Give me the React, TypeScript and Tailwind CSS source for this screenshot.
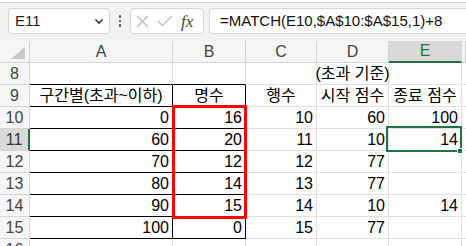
import React from 'react';

type Cell = { v: string; align?: 'c' | 'r' };

const rows: { n: number; cells: Cell[] }[] = [
  { n: 8, cells: [{ v: '' }, { v: '' }, { v: '' }, { v: '(초과 기준)', align: 'c' }, { v: '' }] },
  {
    n: 9,
    cells: [
      { v: '구간별(초과~이하)', align: 'c' },
      { v: '명수', align: 'c' },
      { v: '행수', align: 'c' },
      { v: '시작 점수', align: 'c' },
      { v: '종료 점수', align: 'c' },
    ],
  },
  { n: 10, cells: [{ v: '0' }, { v: '16' }, { v: '10' }, { v: '60' }, { v: '100' }] },
  { n: 11, cells: [{ v: '60' }, { v: '20' }, { v: '11' }, { v: '10' }, { v: '14' }] },
  { n: 12, cells: [{ v: '70' }, { v: '12' }, { v: '12' }, { v: '77' }, { v: '' }] },
  { n: 13, cells: [{ v: '80' }, { v: '14' }, { v: '13' }, { v: '77' }, { v: '' }] },
  { n: 14, cells: [{ v: '90' }, { v: '15' }, { v: '14' }, { v: '10' }, { v: '14' }] },
  { n: 15, cells: [{ v: '100' }, { v: '0' }, { v: '15' }, { v: '77' }, { v: '' }] },
  { n: 16, cells: [{ v: '' }, { v: '' }, { v: '' }, { v: '' }, { v: '' }] },
];

// A9:B15 has a black table border; A8/B8 carry the top edge
const borderFor = (r: number, c: number) => {
  const inTable = c <= 1 && r >= 9 && r <= 15;
  const bottom = inTable || (c <= 1 && r === 8) ? 'border-b-black' : 'border-b-[#e1e1e1]';
  const right = inTable ? 'border-r-black' : 'border-r-[#e1e1e1]';
  return `${bottom} ${right}`;
};

const App: React.FC = () => {
  return (
    <div className="relative w-[466px] h-[246px] overflow-hidden bg-white font-['Liberation_Sans','Noto_Sans_CJK_KR',sans-serif] text-black">
      <div className="h-[3px] bg-white border-b border-[#d6d4d2]" />

      {/* formula bar */}
      <div className="h-[38px] bg-[#f3f2f1] flex items-start pt-[5px] pl-[8px]">
        <div className="w-[102px] h-[26px] bg-white border border-[#d8d6d4] rounded-[4px] flex items-center pl-[6px] pr-[5px] text-[15px] text-[#222]">
          <span className="flex-1">E11</span>
          <svg width="10" height="7" viewBox="0 0 10 7">
            <path d="M1.5 1.5 L5 5 L8.5 1.5" fill="none" stroke="#333" strokeWidth="1.6" />
          </svg>
        </div>
        <div className="w-[20px] h-[26px] flex flex-col items-center justify-center gap-[2px]">
          <span className="w-[2.5px] h-[2.5px] rounded-full bg-[#444]" />
          <span className="w-[2.5px] h-[2.5px] rounded-full bg-[#444]" />
          <span className="w-[2.5px] h-[2.5px] rounded-full bg-[#444]" />
        </div>
        <div className="w-[74px] h-[26px] bg-white border border-[#d8d6d4] rounded-[4px] flex items-center pl-[5px] gap-[8px]">
          <svg width="13" height="13" viewBox="0 0 13 13">
            <path d="M1 1 L12 12 M12 1 L1 12" stroke="#b8b8b8" strokeWidth="1.1" />
          </svg>
          <svg width="16" height="12" viewBox="0 0 16 12">
            <path d="M1 6 L5.5 10.5 L15 1" fill="none" stroke="#b8b8b8" strokeWidth="1.1" />
          </svg>
          <span className="font-['Liberation_Serif',serif] italic text-[17px] text-[#444] leading-none">fx</span>
        </div>
        <div className="ml-[5px] flex-1 h-[26px] bg-white border border-[#d8d6d4] rounded-l-[4px] border-r-0 flex items-center pl-[10px] text-[15px] text-[#111] whitespace-nowrap">
          =MATCH(E10,$A$10:$A$15,1)+8
        </div>
      </div>

      {/* sheet */}
      <div className="grid grid-cols-[30px_143px_73px_71px_72px_73px_1fr] text-[16px] leading-none">
        <div className="h-[22px] bg-[#f5f5f5] border-b border-r border-[#d4d4d4] flex items-end justify-end pr-[4px] pb-[3px]">
          <svg width="14" height="12" viewBox="0 0 14 12">
            <path d="M14 0 L14 12 L0 12 Z" fill="#c8c8c8" />
          </svg>
        </div>
        {['A', 'B', 'C', 'D', 'E', ''].map((l) =>
          l === 'E' ? (
            <div key="E" className="h-[22px] bg-[#d9d9d9] border-r border-r-[#d4d4d4] border-b-2 border-b-[#217346] flex items-center justify-center text-[#217346]">
              E
            </div>
          ) : (
            <div key={l || 'F'} className="h-[22px] bg-[#f5f5f5] border-b border-r border-[#d4d4d4] flex items-center justify-center text-[#444]">
              {l}
            </div>
          )
        )}

        {rows.map((row) => (
          <React.Fragment key={row.n}>
            {row.n === 11 ? (
              <div className="h-[22px] bg-[#d9d9d9] border-b border-b-[#d4d4d4] border-r-2 border-r-[#217346] flex items-center justify-center text-[#333]">
                {row.n}
              </div>
            ) : (
              <div className="h-[22px] bg-[#f5f5f5] border-b border-r border-[#d4d4d4] flex items-center justify-center text-[#444]">
                {row.n}
              </div>
            )}
            {row.cells.map((cell, i) => (
              <div
                key={i}
                className={`h-[22px] border-b border-r ${borderFor(row.n, i)} flex items-center whitespace-nowrap pr-[3px] ${
                  cell.align === 'c' ? 'justify-center pl-[3px]' : 'justify-end'
                }`}
              >
                {cell.v}
              </div>
            ))}
            <div className="h-[22px] border-b border-[#e1e1e1]" />
          </React.Fragment>
        ))}
      </div>

      {/* red highlight around B10:B14 */}
      <div className="absolute left-[172px] top-[105px] w-[75px] h-[114px] border-[3px] border-[#ff0000] pointer-events-none" />

      {/* active cell E11 */}
      <div className="absolute left-[386px] top-[126px] w-[76px] h-[26px] border-2 border-[#217346] pointer-events-none" />
      <div className="absolute left-[457px] top-[148px] w-[6px] h-[6px] bg-[#217346] border border-white pointer-events-none" />
    </div>
  );
};

export default App;
